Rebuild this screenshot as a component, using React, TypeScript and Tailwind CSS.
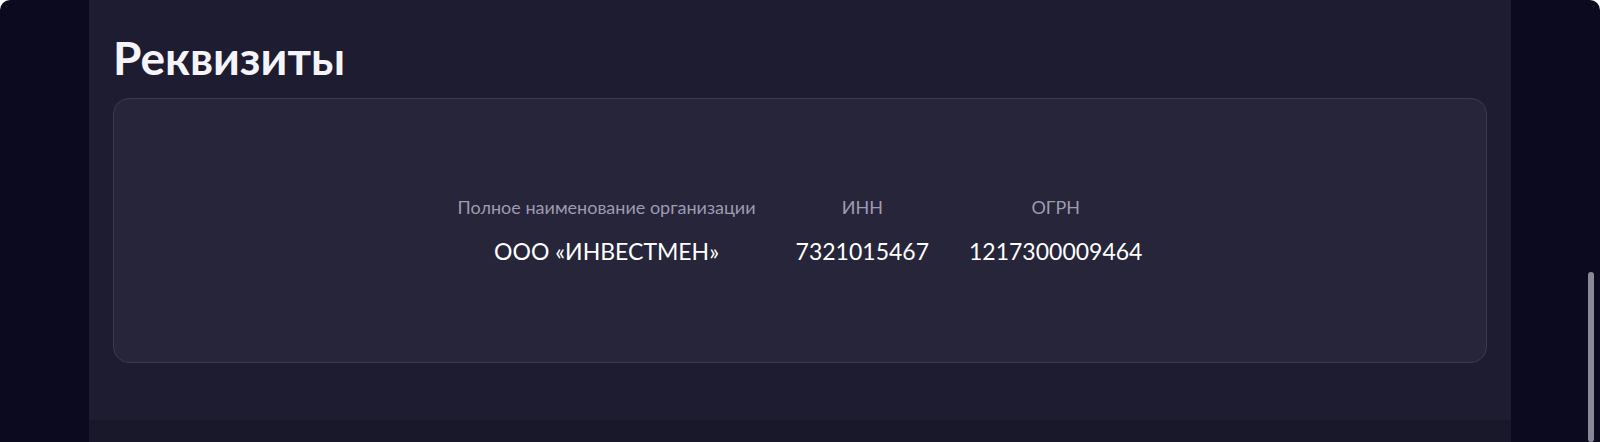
export default function App() {
  const rows = [
    { label: 'Полное наименование организации', value: 'ООО «ИНВЕСТМЕН»' },
    { label: 'ИНН', value: '7321015467' },
    { label: 'ОГРН', value: '1217300009464' },
  ];

  return (
    <div className="bg-white h-[442px] w-[1600px] overflow-hidden" style={{ fontFamily: 'Lato, "Noto Sans", sans-serif' }}>
      <div className="relative h-full rounded-t-[10px] bg-[#0b0a1f]">
        <div className="mx-auto flex h-full w-[1422px] flex-col">
          <section className="h-[420px] bg-[#1e1c31] px-6 pt-[30px]">
            <h2 className="text-[46px] font-bold leading-[56px] text-[#f4f4fa]">Реквизиты</h2>
            <div className="mt-[12px] flex h-[265px] items-center justify-center rounded-2xl border border-[#3a3950] bg-[#27253a]">
              <div className="flex gap-[40px]">
                {rows.map((r) => (
                  <div key={r.label} className="flex flex-col items-center">
                    <span className="text-[18px] leading-[22px] text-[#9c9bb0]">{r.label}</span>
                    <span className="mt-[19px] text-[23px] leading-[28px] text-white">{r.value}</span>
                  </div>
                ))}
              </div>
            </div>
          </section>
          <div className="flex-1 bg-[#19172a]" />
        </div>
        {/* scrollbar */}
        <div className="absolute right-[6px] top-[272px] bottom-0 w-[6px] rounded-full bg-[#8a8999]" />
      </div>
    </div>
  );
}
